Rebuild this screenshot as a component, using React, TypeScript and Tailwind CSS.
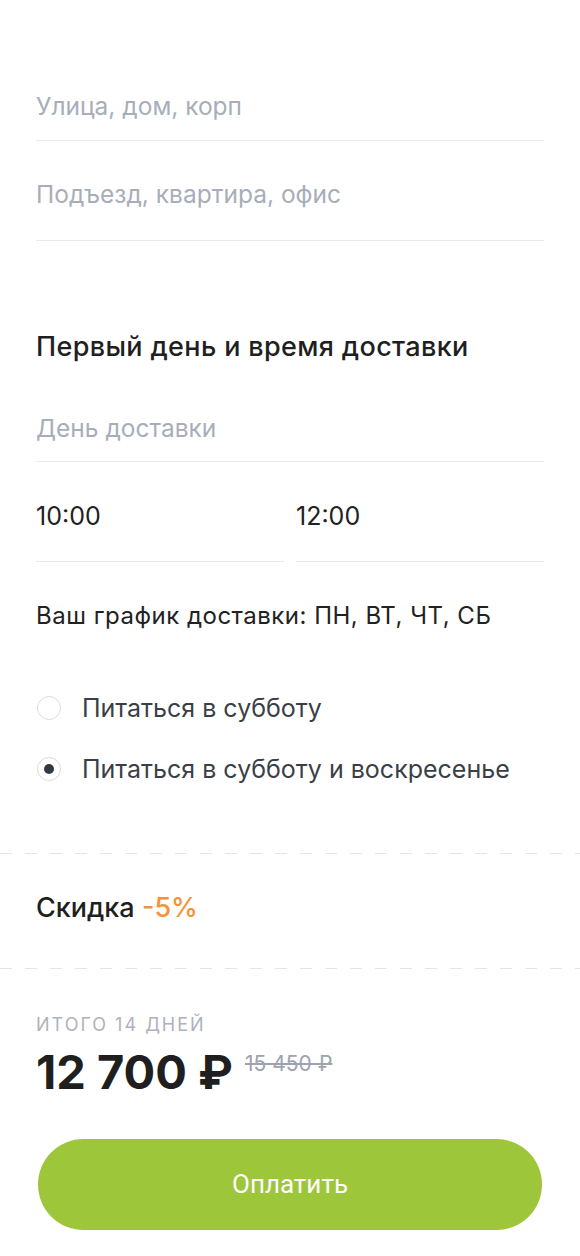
import { useState } from "react";

const dashed =
  "h-px w-full bg-[repeating-linear-gradient(to_right,#e2e4ea_0_12px,transparent_12px_25px)]";

export default function App() {
  const [weekend, setWeekend] = useState<"sat" | "satsun">("satsun");

  const options = [
    { id: "sat" as const, label: "Питаться в субботу" },
    { id: "satsun" as const, label: "Питаться в субботу и воскресенье" },
  ];

  return (
    <div className="min-h-screen bg-white font-['Inter',sans-serif] text-[#1f1f1f]">
      <div className="px-9">
        {/* Address */}
        <div className="pt-[92px] pb-[20px] border-b border-[#e7e9ed] text-[24.5px] leading-[28px] text-[#a7aeb9]">
          Улица, дом, корп
        </div>
        <div className="pt-[39px] pb-[32px] border-b border-[#e7e9ed] text-[24.5px] leading-[28px] text-[#a7aeb9]">
          Подъезд, квартира, офис
        </div>

        {/* Delivery */}
        <h2 className="mt-[90px] text-[27px] leading-[32px] font-medium tracking-[0.35px] text-[#1f1f1f]">
          Первый день и время доставки
        </h2>
        <div className="pt-[51px] pb-[19px] border-b border-[#e7e9ed] text-[24.5px] leading-[28px] text-[#a7aeb9]">
          День доставки
        </div>
        <div className="grid grid-cols-2 gap-3">
          <div className="pt-[40px] pb-[31px] border-b border-[#e7e9ed] text-[25px] leading-[28px] text-[#222]">
            10:00
          </div>
          <div className="pt-[40px] pb-[31px] border-b border-[#e7e9ed] text-[25px] leading-[28px] text-[#222]">
            12:00
          </div>
        </div>

        <p className="mt-[40px] text-[24px] leading-[28px] tracking-[0.5px] text-[#222]">
          Ваш график доставки: ПН, ВТ, ЧТ, СБ
        </p>

        <div className="mt-[64px] flex flex-col gap-[33px]">
          {options.map((o) => (
            <button
              key={o.id}
              onClick={() => setWeekend(o.id)}
              className="flex items-center h-[28px] text-left"
            >
              <span className="ml-px w-6 h-6 rounded-full border-[1.5px] border-[#d8dbe1] flex items-center justify-center shrink-0">
                {weekend === o.id && (
                  <span className="w-[10px] h-[10px] rounded-full bg-[#333944]" />
                )}
              </span>
              <span className="ml-[21px] text-[25px] leading-[28px] text-[#3a3f47]">
                {o.label}
              </span>
            </button>
          ))}
        </div>
      </div>

      <div className={`mt-[70px] ${dashed}`} />

      <div className="px-9">
        <p className="mt-[38px] text-[27px] leading-[32px] font-medium text-[#1f1f1f]">
          Скидка <span className="text-[#f7923a]">-5%</span>
        </p>
      </div>

      <div className={`mt-[44px] ${dashed}`} />

      <div className="px-9 pb-6">
        <p className="mt-[46px] text-[18px] leading-[20px] tracking-[2px] text-[#adb3bd]">
          ИТОГО 14 ДНЕЙ
        </p>
        <div className="mt-[13px] flex items-start">
          <span className="text-[47px] leading-[48px] font-bold text-[#1f1f1f]">
            12 700 ₽
          </span>
          <span className="ml-[12px] mt-[3px] text-[21px] leading-[26px] text-[#9da3ad] line-through">
            15 450 ₽
          </span>
        </div>

        <button className="mt-[43px] mx-[2px] w-[504px] h-[91px] rounded-full bg-[#9ec63b] text-white text-[26px] font-['Roboto',sans-serif]">
          Оплатить
        </button>
      </div>
    </div>
  );
}
